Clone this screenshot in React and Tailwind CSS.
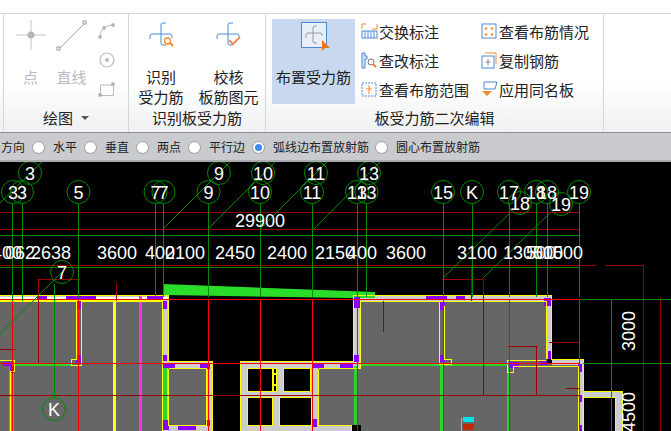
const CJK = { fontFamily: '"Noto Sans CJK SC","Noto Sans",sans-serif' };

function Cross({ stroke = "#4a8ad4", children, className = "" }) {
  return (
    <svg width="26" height="26" viewBox="0 0 26 26" className={className} fill="none">
      <path d="M1 17 v-3 a2 2 0 0 1 2-2 H21 a2 2 0 0 1 2 2 v2" stroke={stroke} strokeWidth="1" />
      <path d="M17 1 H14 a2 2 0 0 0-2 2 V21 a2 2 0 0 0 2 2 h3" stroke={stroke} strokeWidth="1" />
      {children}
    </svg>
  );
}

function SmallIcon({ kind }) {
  const blue = "#4a8ad4", or = "#f08a2c";
  const map = {
    swap: (<g fill="none"><rect x="1" y="8" width="15" height="7" stroke={blue} /><path d="M4 8v7M7 8v7M10 8v7M13 8v7" stroke={blue} /><path d="M1 6V1h4M16 1v5h-5" stroke={or} /></g>),
    edit: (<g fill="none"><path d="M1 1h3v3h2v3H4v9H1z" fill="#cfe0f5" stroke={blue} /><circle cx="10" cy="10" r="3" stroke="#777" /><path d="M12 12l3 3" stroke={or} strokeWidth="2" /></g>),
    range: (<g fill="none"><rect x="1" y="2" width="14" height="13" stroke={blue} strokeDasharray="2 1" /><path d="M8 4v9M5 8h6" stroke={or} /></g>),
    view: (<g fill="none"><rect x="1" y="1" width="14" height="14" stroke={blue} /><path d="M5 4v3M3.5 5.5h3M11 4v3M9.5 5.5h3M5 10v3M3.5 11.5h3M11 10v3M9.5 11.5h3" stroke={or} /></g>),
    copy: (<g fill="none"><path d="M4 1h11v11" stroke={or} /><rect x="1" y="4" width="12" height="12" stroke={blue} /><path d="M7 7v6M4.5 10h5" stroke="#888" /></g>),
    apply: (<g fill="none"><path d="M3 1h13l-2 7H3z" stroke={blue} /><path d="M1 10h10l-5 5z" fill={or} /></g>),
  };
  return <svg width="17" height="17" viewBox="0 0 17 17" className="shrink-0">{map[kind]}</svg>;
}

function ListItem({ kind, label }) {
  return (
    <div className="flex items-center gap-[1px] h-[29px] whitespace-nowrap">
      <span className="w-[17px] flex justify-center"><SmallIcon kind={kind} /></span>
      <span className="text-[15px] leading-none text-[#222]">{label}</span>
    </div>
  );
}

function Group({ width, label, children, arrow }) {
  return (
    <div className="flex flex-col shrink-0 border-r border-[#d4d6d8]" style={{ width }}>
      <div className="h-[94px] flex">{children}</div>
      <div className="flex-1 flex items-center justify-center text-[15px] leading-none text-[#222] pb-[5px] gap-2">
        <span>{label}</span>
        {arrow && <span className="w-0 h-0 border-l-[4px] border-r-[4px] border-t-[4px] border-l-transparent border-r-transparent border-t-[#555]" />}
      </div>
    </div>
  );
}

function Radio({ on }) {
  return (
    <span className="w-[13px] h-[13px] rounded-full bg-white border border-[#9a9a9a] flex items-center justify-center shrink-0">
      {on && <span className="w-[7px] h-[7px] rounded-full bg-[#3f8cf0]" />}
    </span>
  );
}

/* CAD drawing data */
const BUBBLES = [
  ["3", 30, 173], ["3", 13, 192], ["3", 22, 192], ["5", 78.5, 192], ["7", 155.5, 192], ["7", 163.5, 192],
  ["9", 219, 173], ["9", 208.5, 192], ["10", 263, 173], ["10", 260, 192], ["11", 316, 173], ["11", 312, 192],
  ["13", 369, 173], ["13", 357, 192], ["13", 366.5, 192], ["15", 443, 192], ["K", 472, 192], ["17", 509, 192],
  ["18", 520, 203], ["18", 536, 192], ["18", 547, 192], ["19", 561, 204], ["19", 579, 192], ["7", 62, 272], ["K", 54, 409],
];
const AXES = [12.5, 22, 78.5, 155.5, 163.5, 208.5, 260, 312, 357, 366.5, 443, 472, 509, 536, 547, 579];
const DIMS = [
  ["400", -8], ["062", 5], ["2638", 31], ["3600", 97], ["400", 145], ["2100", 165], ["2450", 215], ["2400", 267],
  ["2150", 315], ["400", 347], ["3600", 386], ["3100", 457], ["1300", 503], ["500", 526], ["500", 533], ["1500", 543],
];
const LEADERS = [
  [42, 162, 0, 203], [230, 162, 163, 229], [275, 162, 208, 229], [327, 162, 260, 229], [380, 162, 314, 229],
  [510, 213, 443, 278], [550, 213, 483, 278], [62, 272, 0, 334],
];
const PURPLE = [
  [37, 296, 10, 3], [66, 296, 30, 3], [147, 296, 16, 3], [162, 301, 5, 8], [162, 355, 5, 6], [76, 301, 5, 8], [76, 355, 5, 8], [3, 362, 10, 4], [10, 366, 4, 7],
  [163, 364, 12, 4], [200, 364, 10, 5], [163, 420, 6, 10], [205, 420, 5, 6], [178, 426, 18, 4], [313, 364, 11, 4], [313, 419, 4, 8],
  [354, 297, 6, 11], [426, 296, 21, 4], [456, 296, 9, 4], [544, 298, 7, 8], [354, 355, 5, 7], [340, 364, 13, 4], [440, 301, 5, 9], [440, 355, 5, 7], [509, 362, 10, 6],
  [540, 361, 7, 4], [548, 351, 4, 8], [578, 364, 4, 8], [578, 395, 4, 7], [578, 425, 4, 6],
];
const REDV = [12.5, 78.5, 208.5, 260, 312, 357, 443, 509, 579];

export default function App() {
  return (
    <div className="w-[671px] h-[431px] overflow-hidden flex flex-col bg-white" style={CJK}>
      <div className="h-[14px] shrink-0 bg-white border-b border-[#d8d8d8]" />
      <div className="h-[118px] shrink-0 flex pl-[3px] bg-gradient-to-b from-white from-60% to-[#eef0f1]">
        <div className="w-[1px] bg-[#d4d6d8] shrink-0" />
        <Group width={125} label="绘图" arrow>
          <div className="w-[53px] flex flex-col items-center text-[#bbb]">
            <svg width="32" height="32" viewBox="0 0 32 32" className="mt-[5px]">
              <path d="M16 1v30M1 16h30" stroke="#c4c4c4" />
              <circle cx="16" cy="16" r="3.500" fill="#b5b5b5" />
            </svg>
            <span className="text-[15px] leading-none mt-[18px]">点</span>
          </div>
          <div className="w-[29px] flex flex-col items-center text-[#bbb]">
            <svg width="32" height="32" viewBox="0 0 32 32" className="mt-[5px] shrink-0">
              <path d="M3 30L28 5" stroke="#aaa" />
              <rect x="1" y="28" width="3" height="3" fill="white" stroke="#999" />
              <rect x="27" y="2" width="3" height="3" fill="white" stroke="#999" />
            </svg>
            <span className="text-[15px] leading-none mt-[18px] whitespace-nowrap">直线</span>
          </div>
          <div className="flex-1 flex flex-col items-end pr-[12px] pt-[8px] gap-[11px]">
            <svg width="18" height="18" viewBox="0 0 18 18" fill="none"><path d="M2 15C2 8 7 3 15 3" stroke="#bbb" /><rect x="1" y="14" width="2" height="2" fill="white" stroke="#999" /><rect x="14" y="2" width="2" height="2" fill="white" stroke="#999" /><rect x="5" y="5" width="2" height="2" fill="white" stroke="#999" /></svg>
            <svg width="18" height="18" viewBox="0 0 18 18" fill="none"><circle cx="9" cy="9" r="7" stroke="#bbb" strokeWidth="1.200" /><rect x="8" y="8" width="2" height="2" stroke="#999" /></svg>
            <svg width="18" height="18" viewBox="0 0 18 18" fill="none"><path d="M2.500 15.500V5H15.500V15.500Z" stroke="#bbb" /><rect x="1" y="14" width="2" height="2" fill="white" stroke="#999" /><rect x="14" y="3" width="2" height="2" fill="white" stroke="#999" /></svg>
          </div>
        </Group>
        <Group width={137} label="识别板受力筋">
          <div className="w-[62px] ml-[1px] flex flex-col items-center text-[15px] leading-[20px] text-[#222]">
            <Cross className="mt-[8px] mb-[19px] shrink-0 translate-x-[1px]">
              <circle cx="18.500" cy="19" r="3" stroke="#f08a2c" strokeWidth="1.300" />
              <path d="M21 21l3 3" stroke="#f08a2c" strokeWidth="2" />
            </Cross>
            <span>识别</span>
            <span className="whitespace-nowrap">受力筋</span>
          </div>
          <div className="flex-1 flex flex-col items-center text-[15px] leading-[20px] text-[#222]">
            <Cross className="mt-[8px] mb-[19px] shrink-0">
              <path d="M13 18l4 4 7-7" stroke="#f5905a" strokeWidth="2.200" />
            </Cross>
            <span>校核</span>
            <span className="whitespace-nowrap">板筋图元</span>
          </div>
        </Group>
        <Group width={338} label="板受力筋二次编辑">
          <div className="w-[83px] h-[85px] ml-[6px] mt-[5px] bg-[#c8d8ee] flex flex-col items-center text-[15px] leading-[20px] text-[#222] shrink-0">
            <div className="relative w-[26px] h-[26px] mt-[3px] mb-[19px] bg-white/60 border border-[#4a8ad4]">
              <svg width="18" height="20" viewBox="0 0 18 20" fill="none" className="absolute left-[3px] top-[2px]">
                <path d="M1 13V10a2 2 0 0 1 2-2H15a2 2 0 0 1 2 2v1M12 1H10a2 2 0 0 0-2 2V16a2 2 0 0 0 2 2h2" stroke="#999" />
              </svg>
              <svg width="10" height="12" viewBox="0 0 10 12" className="absolute left-[19px] top-[17px]"><path d="M1 0L9 8H4L1 11Z" fill="#ee7420" /></svg>
            </div>
            <span className="whitespace-nowrap">布置受力筋</span>
          </div>
          <div className="w-[120px] ml-[6px] pt-[3px] shrink-0">
            <ListItem kind="swap" label="交换标注" />
            <ListItem kind="edit" label="查改标注" />
            <ListItem kind="range" label="查看布筋范围" />
          </div>
          <div className="flex-1 pt-[3px]">
            <ListItem kind="view" label="查看布筋情况" />
            <ListItem kind="copy" label="复制钢筋" />
            <ListItem kind="apply" label="应用同名板" />
          </div>
        </Group>
      </div>
      <div className="h-[1px] shrink-0 bg-[#8e9296]" />
      <div className="h-[27px] shrink-0 pt-[1px] bg-[#c9cbcf] flex items-center text-[12px] leading-none text-[#222] whitespace-nowrap">
        <span className="ml-[1px]">方向</span>
        <span className="ml-[7px]"><Radio /></span>
        <span className="ml-[8px]">水平</span>
        <span className="ml-[7px]"><Radio /></span>
        <span className="ml-[8px]">垂直</span>
        <span className="ml-[7px]"><Radio /></span>
        <span className="ml-[8px]">两点</span>
        <span className="ml-[7px]"><Radio /></span>
        <span className="ml-[8px]">平行边</span>
        <span className="ml-[7px]"><Radio on /></span>
        <span className="ml-[8px]">弧线边布置放射筋</span>
        <span className="ml-[6px]"><Radio /></span>
        <span className="ml-[8px]">圆心布置放射筋</span>
      </div>
      <div className="h-[2px] shrink-0 bg-[#a8aaad]" />
      <svg width="671" height="269" viewBox="0 162 671 269" className="block bg-black shrink-0" style={{ fontFamily: '"Liberation Sans",sans-serif' }}>
        {/* floor */}
        <g fill="#666666">
          <rect x="0" y="301" width="162" height="130" />
          <rect x="168" y="368" width="39" height="57" />
          <rect x="318" y="368" width="43" height="57" />
          <rect x="361" y="301" width="186" height="62" />
          <rect x="361" y="363" width="217" height="68" />
        </g>
        {/* wall fills */}
        <g fill="#cccccc">
          <rect x="0" y="296" width="168" height="5" />
          <rect x="162" y="301" width="6" height="60" />
          <rect x="162" y="361" width="50" height="7" />
          <rect x="207" y="368" width="5" height="63" />
          <rect x="162" y="368" width="6" height="63" />
          <rect x="241" y="362" width="77" height="69" />
          <rect x="318" y="362" width="42" height="6" />
          <rect x="353" y="296" width="199" height="5" />
          <rect x="354" y="301" width="6" height="62" />
          <rect x="547" y="301" width="5" height="58" />
          <rect x="552" y="360" width="31" height="5" />
          <rect x="578" y="365" width="5" height="66" />
          <rect x="583" y="392" width="39" height="5" />
          <rect x="615" y="397" width="7" height="34" />
          <rect x="318" y="425" width="33" height="6" />
          <rect x="162" y="426" width="50" height="5" />
        </g>
        <rect x="0" y="297" width="168" height="2" fill="#ffffff" />
        {/* core holes */}
        <g fill="#000" stroke="#ffff00" strokeWidth="1">
          <rect x="247.500" y="368.500" width="25" height="23" />
          <rect x="283.500" y="368.500" width="27" height="23" />
          <rect x="247.500" y="397.500" width="25" height="28" />
          <rect x="279.500" y="397.500" width="32" height="28" />
          <rect x="273.500" y="368.500" width="3" height="5" />
          <rect x="273.500" y="374.500" width="3" height="10" />
          <rect x="273.500" y="385.500" width="3" height="6" />
        </g>
        {/* wedge */}
        <polygon points="163,284 375,292 375,298 350,298 163,295" fill="#2bdd2b" />
        {/* thick member bars */}
        <g>
          <rect x="113" y="301" width="3" height="130" fill="#ffff00" />
          <rect x="139" y="296" width="3" height="135" fill="#ff33ee" />
          <rect x="15" y="364" width="58" height="2" fill="#2bd42b" />
          <rect x="9" y="367" width="5" height="64" fill="#2bd42b" />
          <rect x="163" y="368" width="4" height="57" fill="#2bd42b" />
          <rect x="360" y="364" width="148" height="2" fill="#2bd42b" />
          <rect x="440" y="366" width="3" height="65" fill="#2bd42b" />
          <rect x="507" y="366" width="3" height="65" fill="#2bd42b" />
          <rect x="354" y="366" width="3" height="59" fill="#2bd42b" />
        </g>
        {/* purple */}
        <g fill="#8a00ff">
          {PURPLE.map(([x, y, w, h], i) => <rect key={i} x={x} y={y} width={w} height={h} />)}
        </g>
        {/* yellow outlines */}
        <g fill="none" stroke="#ffff00" strokeWidth="1" shapeRendering="crispEdges">
          <path d="M0 295.500H168.500V361.500H212.500V431" />
          <path d="M0 300.500H162.500V361" />
          <path d="M0 301.500H76.500V359.500H71.500V365.500H81.500V301.500H162" />
          <path d="M0 360.500H14.500V371.500H10.500V431" />
          <path d="M168.500 368.500H206.500V425.500H168.500V368.500" />
          <path d="M162.500 361V431" />
          <path d="M240.500 431V361.500H318.500M318.500 368.500V425.500H351.500V431" />
          <path d="M318.500 368.500H360.500V301.500H546.500V358.500" />
          <path d="M353.500 361.500V295.500H551.500V359.500H583.500V431" />
          <path d="M578 431V366.500H513.500V372.500H507.500V360.500H546" />
          <path d="M318 361.500H353.500" />
          <path d="M439.500 301.500V364.500H451.500V359.500H444.500V306" />
          <path d="M583 391.500H622.500V431M583 397.500H615.500V431" />
        </g>
        {/* red grid */}
        <g shapeRendering="crispEdges">
          <rect x="0" y="299" width="580" height="1" fill="#ff0000" />
          <rect x="0" y="363" width="580" height="1" fill="#ff0000" />
          {REDV.map((x) => <rect key={x} x={x - 0.5} y="300" width="1" height="131" fill="#ff0000" />)}
          <g fill="#990000">
            <rect x="0" y="212" width="580" height="1" />
            <rect x="0" y="229" width="580" height="1" />
            <rect x="0" y="265" width="596" height="1" />
            <rect x="606" y="265" width="38" height="1" />
            <rect x="0" y="395" width="579" height="1" />
            <rect x="37" y="279" width="43" height="1" />
            <rect x="442" y="279" width="42" height="1" />
            <rect x="38" y="279" width="1" height="84" />
            <rect x="54" y="288" width="1" height="14" />
            <rect x="116" y="283" width="1" height="18" />
            <rect x="471" y="265" width="1" height="36" />
            <rect x="483" y="279" width="1" height="116" />
            <rect x="643" y="265" width="1" height="166" />
            <rect x="660" y="298" width="1" height="133" />
            <rect x="383" y="301" width="1" height="31" />
            <rect x="508" y="346" width="30" height="1" />
            <rect x="536" y="346" width="1" height="49" />
            <rect x="549" y="342" width="30" height="1" />
            <rect x="566" y="388" width="13" height="1" />
            <rect x="0" y="349" width="15" height="1" />
          </g>
        </g>
        {/* axes */}
        <g stroke="#008a00" strokeWidth="1" shapeRendering="crispEdges">
          {AXES.map((x) => <line key={x} x1={x} y1="204" x2={x} y2={x === 12.5 || x === 22 ? 301 : 297} />)}
          <line x1="54.500" y1="284" x2="54.500" y2="397" />
          <line x1="0" y1="235.500" x2="580" y2="235.500" />
          <line x1="0" y1="267.500" x2="580" y2="267.500" />
          <line x1="580" y1="299.500" x2="671" y2="299.500" />
          <line x1="583" y1="363.500" x2="671" y2="363.500" />
          <line x1="611.500" y1="299" x2="611.500" y2="431" />
        </g>
        <g stroke="#008a00" strokeWidth="1" fill="none">
          {LEADERS.map(([a, b, c, d], i) => <line key={i} x1={a} y1={b} x2={c} y2={d} />)}
          {BUBBLES.map(([, x, y], i) => <circle key={i} cx={x} cy={y} r="11.500" />)}
        </g>
        {/* text */}
        <g fill="#ffffff" fontSize="18">
          {BUBBLES.map(([t, x, y], i) => <text key={i} x={x} y={y + 6.5} textAnchor="middle">{t}</text>)}
          {DIMS.map(([t, x], i) => <text key={i} x={x} y="258.500">{t}</text>)}
          <text x="260" y="226.500" textAnchor="middle">29900</text>
          <text transform="translate(634.500 331) rotate(-90)" textAnchor="middle">3000</text>
          <text transform="translate(634.500 412) rotate(-90)" textAnchor="middle">4500</text>
        </g>
        {/* flag */}
        <g shapeRendering="crispEdges">
          <rect x="461" y="418" width="1" height="13" fill="#00ffff" />
          <rect x="463" y="417" width="11" height="5" fill="#00e5e5" />
          <rect x="463" y="424" width="11" height="6" fill="#c8280a" />
        </g>
      </svg>
    </div>
  );
}
